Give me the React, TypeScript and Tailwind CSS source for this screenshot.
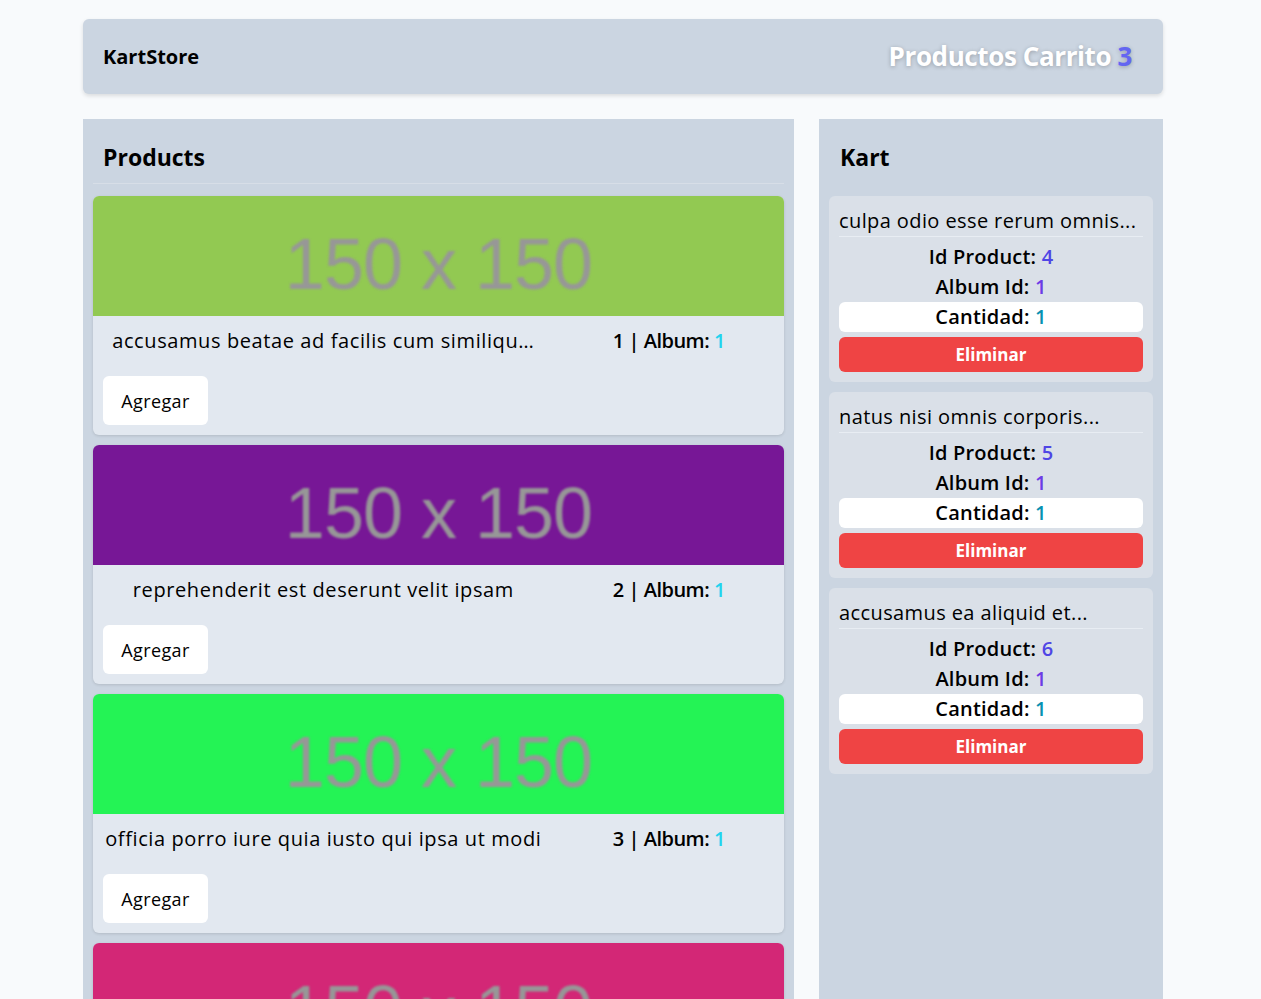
import React from 'react';

// Products shown in the catalogue (jsonplaceholder photos, album 1)
const products = [
  { id: 1, albumId: 1, color: 'bg-[#92c952]', title: 'accusamus beatae ad facilis cum similiqu…' },
  { id: 2, albumId: 1, color: 'bg-[#771796]', title: 'reprehenderit est deserunt velit ipsam' },
  { id: 3, albumId: 1, color: 'bg-[#24f355]', title: 'officia porro iure quia iusto qui ipsa ut modi' },
  { id: 4, albumId: 1, color: 'bg-[#d32776]', title: 'culpa odio esse rerum omnis laboriosam volupt…' },
  { id: 5, albumId: 1, color: 'bg-[#f66b97]', title: 'natus nisi omnis corporis facere molestiae re…' },
  { id: 6, albumId: 1, color: 'bg-[#56a8c2]', title: 'accusamus ea aliquid et amet sequi nemo' },
];

const kart = [
  { id: 4, albumId: 1, qty: 1, title: 'culpa odio esse rerum omnis...' },
  { id: 5, albumId: 1, qty: 1, title: 'natus nisi omnis corporis...' },
  { id: 6, albumId: 1, qty: 1, title: 'accusamus ea aliquid et...' },
];

const font = { fontFamily: '"Open Sans", "Noto Sans", sans-serif' };

const Placeholder = ({ color }: { color: string }) => (
  <div className={`${color} h-[120px] rounded-t-md flex items-center justify-center overflow-hidden pt-[16px]`}>
    <span className="font-['Liberation_Sans',Arial,sans-serif] text-[72px] leading-none tracking-[-1px] text-[#979797] blur-[1px] select-none">
      150 x 150
    </span>
  </div>
);

function ProductCard({ p }: { p: (typeof products)[number] }) {
  return (
    <div className="bg-[#e2e8f0] rounded-md shadow-[0_1px_3px_rgba(0,0,0,0.12)] pb-[10px]">
      <Placeholder color={p.color} />
      <div className="flex items-center py-[11px]">
        <div className="w-2/3 px-3 text-center text-xl leading-7 truncate tracking-[0.6px]">{p.title}</div>
        <div className="w-1/3 text-center text-xl leading-7 font-semibold tracking-[-0.5px]">
          {p.id} | Album: <span className="text-[#22d3ee]">{p.albumId}</span>
        </div>
      </div>
      <button className="ml-[10px] mt-[10px] h-[49px] w-[105px] bg-white rounded-md text-lg tracking-[0.4px]">
        Agregar
      </button>
    </div>
  );
}

function KartItem({ k }: { k: (typeof kart)[number] }) {
  return (
    <div className="bg-[#dae0e8] rounded-md p-[10px]">
      <div className="text-xl leading-[30px] border-b border-[#e8edf3] truncate tracking-[0.4px]">{k.title}</div>
      <div className="mt-[5px] text-center text-xl leading-[30px] font-semibold tracking-[0.2px]">
        Id Product: <span className="text-[#4f46e5]">{k.id}</span>
      </div>
      <div className="text-center text-xl leading-[30px] font-semibold tracking-[0.2px]">
        Album Id: <span className="text-[#6d3be6]">{k.albumId}</span>
      </div>
      <div className="bg-white rounded-md text-center text-xl leading-[30px] font-semibold tracking-[0.2px]">
        Cantidad: <span className="text-[#0891b2]">{k.qty}</span>
      </div>
      <button className="mt-[5px] w-full h-[35px] bg-[#ef4444] rounded-md text-white font-bold text-[17px]">
        Eliminar
      </button>
    </div>
  );
}

export default function App() {
  return (
    <div className="min-h-screen bg-[#f8fafc] text-black pr-[15px]" style={font}>
      <div className="max-w-[1080px] mx-auto pt-[19px] pb-[30px]">
        {/* Navbar */}
        <header className="h-[75px] bg-[#cbd5e1] rounded-md shadow-[0_2px_4px_rgba(0,0,0,0.12)] flex items-center justify-between pl-5 pr-[31px]">
          <span className="text-xl font-bold">KartStore</span>
          <span className="text-[26px] font-bold tracking-[-0.4px] text-white [text-shadow:0_1px_4px_rgba(0,0,0,0.25)]">
            Productos Carrito <span className="text-[#6366f1]">3</span>
          </span>
        </header>

        <div className="flex gap-[25px] mt-[25px] items-stretch">
          {/* Products */}
          <section className="w-[711px] bg-[#cbd5e1] px-[10px] pb-[10px]">
            <h2 className="px-[10px] pt-[24px] pb-[12px] mb-[12px] text-[23px] leading-7 font-bold border-b border-[#d7dee7]">
              Products
            </h2>
            <div className="flex flex-col gap-[10px]">
              {products.map((p) => (
                <ProductCard key={p.id} p={p} />
              ))}
            </div>
          </section>

          {/* Kart */}
          <section className="flex-1 bg-[#cbd5e1] px-[10px] pb-[10px]">
            <h2 className="px-[11px] pt-[24px] pb-[12px] mb-[13px] text-[23px] leading-7 font-bold">Kart</h2>
            <div className="flex flex-col gap-[10px]">
              {kart.map((k) => (
                <KartItem key={k.id} k={k} />
              ))}
            </div>
          </section>
        </div>
      </div>
    </div>
  );
}
